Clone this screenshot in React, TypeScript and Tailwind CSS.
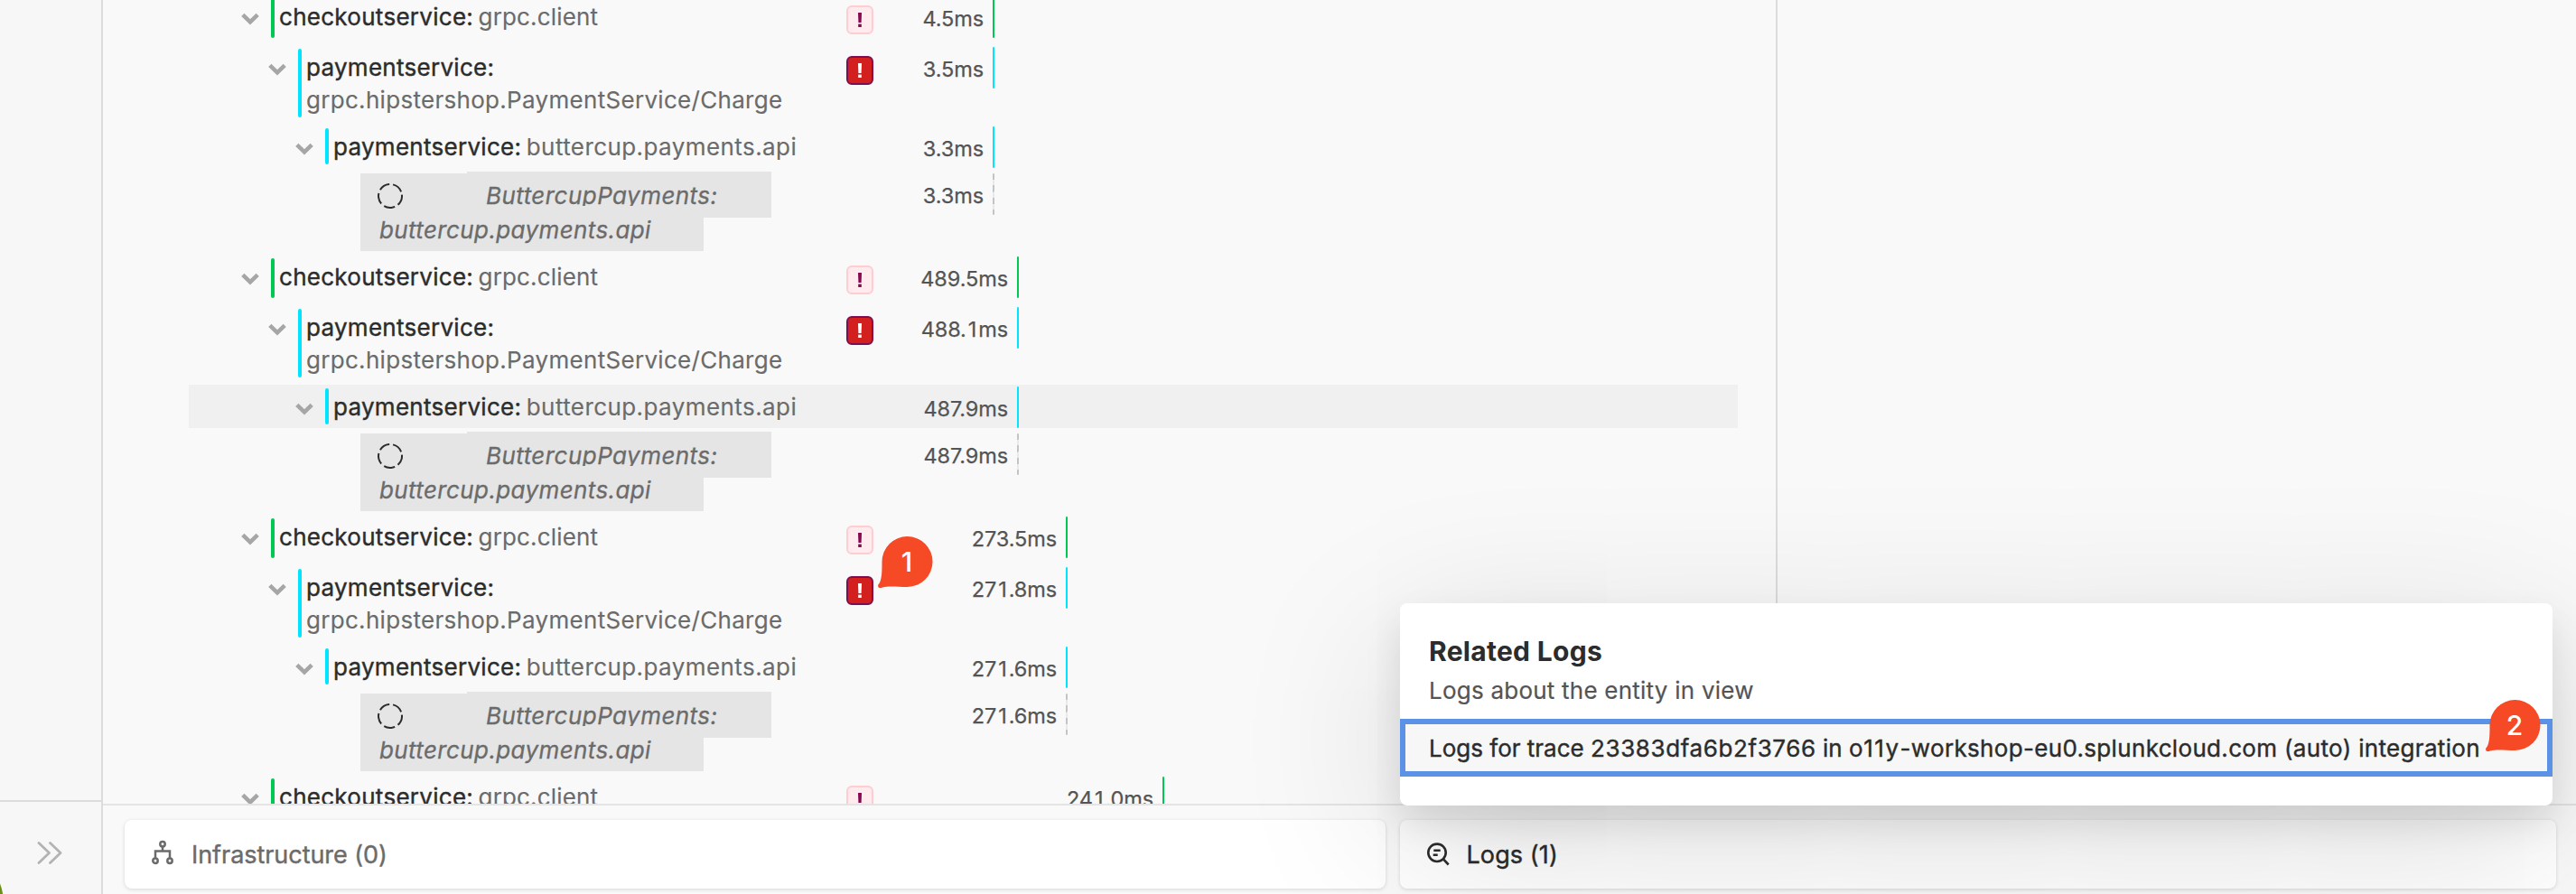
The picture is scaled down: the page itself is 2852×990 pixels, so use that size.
import React from "react";

type Group = { durs: string[]; dur: string; hover?: boolean };

const groups: Group[] = [
  { durs: ["4.5ms", "3.5ms", "3.3ms", "3.3ms"], dur: "w-[122px]" },
  { durs: ["489.5ms", "488.1ms", "487.9ms", "487.9ms"], dur: "w-[149px]", hover: true },
  { durs: ["273.5ms", "271.8ms", "271.6ms", "271.6ms"], dur: "w-[203px]" },
];

const nameClass =
  "ml-[5px] pt-[7px] text-[26px] leading-[36px] tracking-[0.3px] whitespace-nowrap text-[#6b6b6b] [-webkit-text-stroke:0.15px]";

function Caret() {
  return (
    <svg className="mt-[20px] h-[14px] w-[20px] shrink-0" viewBox="0 0 20 14" fill="none">
      <path d="M1.800 2.400 L10 10.400 L18.200 2.400" stroke="#a6a6a6" strokeWidth="4.600" />
    </svg>
  );
}

function Service({ children }: { children: string }) {
  return <span className="tracking-[0.28px] text-[#2c2c2c] [-webkit-text-stroke:0.4px]">{children}</span>;
}

function ErrorBadge({ kind }: { kind?: "soft" | "solid" }) {
  if (!kind) return <div className="w-[30px] shrink-0" />;
  const solid = kind === "solid";
  return (
    <div
      className={
        "mt-3 flex h-8 w-[30px] shrink-0 items-center justify-center rounded-[6px] border-2 " +
        (solid ? "border-[#7d0f50] bg-[#d41f1f]" : "border-[#ffccd2] bg-[#ffebed]")
      }
    >
      <svg width="4" height="16" viewBox="0 0 4 16" fill={solid ? "#ffffff" : "#840a50"}>
        <path d="M0 0H4L3.600 11H0.400Z" />
        <rect x="0.200" y="12.600" width="3.600" height="3.400" />
      </svg>
    </div>
  );
}

function Timing({ text, dur, color }: { text: string; dur: string; color: string }) {
  const [head, tail] = text.split("1");
  return (
    <>
      <div
        className={
          "shrink-0 pt-[11px] text-right text-[23.5px] leading-[32px] tracking-[-0.1px] text-[#545454] [-webkit-text-stroke:0.25px] " +
          dur
        }
      >
        {head}
        {tail !== undefined && <span className="px-[2px]">1</span>}
        {tail}
      </div>
      <div className={"mt-[2px] ml-[10px] h-[46px] w-[2px] shrink-0 rounded-[1px] " + color} />
    </>
  );
}

function CheckoutRow({ text, dur }: { text: string; dur: string }) {
  return (
    <div className="flex h-14 shrink-0">
      <div className="flex w-[728px] shrink-0 pl-[58px]">
        <Caret />
        <div className="mt-1 ml-[13px] h-11 w-1 rounded-[2px] bg-[#00c853]" />
        <div className={nameClass}>
          <Service>checkoutservice:</Service>
          <span className="ml-[5.500px] tracking-[0.15px]">grpc.client</span>
        </div>
      </div>
      <ErrorBadge kind="soft" />
      <Timing text={text} dur={dur} color="bg-[#00c853]" />
    </div>
  );
}

function SpanGroup({ g }: { g: Group }) {
  return (
    <div className="h-72 shrink-0">
      <CheckoutRow text={g.durs[0]} dur={g.dur} />
      <div className="flex h-[88px]">
        <div className="flex w-[728px] shrink-0 pl-[88px]">
          <Caret />
          <div className="mt-1 ml-[13px] h-[76px] w-1 rounded-[2px] bg-[#00e5ff]" />
          <div className={nameClass}>
            <div>
              <Service>paymentservice:</Service>
            </div>
            <div>grpc.hipstershop.PaymentService/Charge</div>
          </div>
        </div>
        <ErrorBadge kind="solid" />
        <Timing text={g.durs[1]} dur={g.dur} color="bg-[#00e5ff]" />
      </div>
      <div className={"mb-1 flex h-12 w-[1715px] " + (g.hover ? "bg-[#f0f0f0]" : "")}>
        <div className="flex w-[728px] shrink-0 pl-[118px]">
          <Caret />
          <div className="mt-1 ml-[13px] h-10 w-1 rounded-[2px] bg-[#00e5ff]" />
          <div className={nameClass}>
            <Service>paymentservice:</Service>
            <span className="ml-[5.500px] tracking-[0.42px]">buttercup.payments.api</span>
          </div>
        </div>
        <ErrorBadge />
        <Timing text={g.durs[2]} dur={g.dur} color="bg-[#00e5ff]" />
      </div>
      <div className="flex h-[92px]">
        <div className="w-[728px] shrink-0 pl-[190px] text-[26px] leading-[36px] tracking-[0.45px] whitespace-nowrap text-[#6b6b6b] italic [-webkit-text-stroke:0.3px]">
          <div className="flex h-[51px] w-[455px]">
            <div className="mt-[2px] w-[118px] bg-[#e5e5e5] pt-[11px] pl-[19px]">
              <svg width="28" height="28" viewBox="0 0 28 28" fill="none">
                <circle
                  cx="14"
                  cy="14"
                  r="13"
                  stroke="#2c2c2c"
                  strokeWidth="2"
                  strokeDasharray="12.400 3.936"
                  transform="rotate(-6 14 14)"
                />
              </svg>
            </div>
            <div className="flex-1 bg-[#e5e5e5] pl-[21px]">
              <div className="h-[38px] overflow-hidden pt-[9px]">ButtercupPayments:</div>
            </div>
          </div>
          <div className="flex h-[37px] w-[380px] bg-[#e5e5e5] pl-[21px]">
            <div className="-mt-1 tracking-[0.38px]">buttercup.payments.api</div>
          </div>
        </div>
        <ErrorBadge />
        <Timing
          text={g.durs[3]}
          dur={g.dur}
          color="bg-[repeating-linear-gradient(165deg,#c4c4c4_0_7px,#e9e9e9_7px_13px)]"
        />
      </div>
    </div>
  );
}

function Marker({ n, pos }: { n: number; pos: string }) {
  return (
    <div className={"absolute h-[58px] w-[61px] " + pos}>
      <svg className="absolute inset-0" width="61" height="58" viewBox="0 0 61 58" fill="#f64a26">
        <path d="M32.500 0 A28 28 0 1 1 32.500 56 C22 56 12 54.500 5 56.500 C0.500 58.500 -1.500 54.500 1.500 52 C4.500 47 4.500 38 4.500 28 A28 28 0 0 1 32.500 0Z" />
      </svg>
      <div className="absolute top-0 left-[4px] w-14 text-center text-[30px] leading-[57px] font-medium text-white">
        {n}
      </div>
    </div>
  );
}

export default function App() {
  return (
    <div className="relative flex h-[990px] w-[2852px] overflow-hidden bg-[#f9f9f9] font-['Inter',sans-serif]">
      <aside className="relative flex w-[114px] shrink-0 flex-col overflow-hidden border-r-2 border-[#dcdcdc] bg-[#f7f7f7]">
        <div className="h-[888px] shrink-0 border-b-2 border-[#dcdcdc]" />
        <div className="flex flex-1 pt-[44px] pl-[41px]">
          <svg
            width="28"
            height="25"
            viewBox="0 0 28 25"
            fill="none"
            stroke="#b3b3b3"
            strokeWidth="2.800"
            strokeLinecap="round"
            strokeLinejoin="round"
          >
            <path d="M2 1.500 L13.500 12.500 L2 23.500 M14.500 1.500 L26 12.500 L14.500 23.500" />
          </svg>
        </div>
        <div className="absolute top-[940px] -left-[116px] h-[120px] w-[120px] rounded-full bg-[#6b8e16]" />
      </aside>
      <div className="flex flex-1 flex-col">
        <div className="flex h-[890px]">
          <div className="-mt-[6px] flex h-[896px] w-[1852px] flex-col overflow-hidden pl-[95px]">
            {groups.map((g, i) => (
              <SpanGroup key={i} g={g} />
            ))}
            <CheckoutRow text="241.0ms" dur="w-[310px]" />
          </div>
          <div className="flex-1 border-l-2 border-[#dcdcdc]" />
        </div>
        <div className="flex h-[100px] gap-4 border-t-2 border-[#e4e4e4] pt-4 pr-[22px] pl-6">
          <div className="flex h-[76px] w-[1396px] items-center rounded-[8px] bg-white pl-[29px] text-[#6b6b6b] shadow-[0_1px_4px_rgba(0,0,0,0.14)]">
            <svg
              className="overflow-visible"
              width="26"
              height="28"
              viewBox="0 0 26 28"
              fill="none"
              stroke="currentColor"
              strokeWidth="2.500"
            >
              <circle cx="13" cy="2.700" r="2.700" />
              <circle cx="5" cy="21.300" r="2.700" />
              <circle cx="21" cy="21.300" r="2.700" />
              <path d="M13 5.500 V10.500 M5 18.500 V10.500 H21 V18.500" />
            </svg>
            <span className="ml-[19px] pt-[2px] text-[27px] tracking-[-0.05px] [-webkit-text-stroke:0.4px]">
              Infrastructure (0)
            </span>
          </div>
          <div className="flex h-[76px] flex-1 items-center rounded-[8px] bg-white pl-[29px] text-[#2c2c2c] shadow-[0_1px_4px_rgba(0,0,0,0.14)]">
            <svg width="26" height="26" viewBox="0 0 26 26" fill="none" stroke="currentColor" strokeWidth="2.600">
              <circle cx="12" cy="11.300" r="9.700" />
              <path d="M18.500 17.800 L24.700 24.500 M8.300 8.800 H15.700 M7.700 13.800 H12.700" />
            </svg>
            <span className="ml-[18.500px] pt-[2px] text-[27px] tracking-[0.1px] [-webkit-text-stroke:0.4px]">
              Logs (1)
            </span>
          </div>
        </div>
      </div>

      <div className="absolute top-[668px] left-[1550px] h-56 w-[1276px] rounded-[8px] bg-white pt-[35px] text-[#2c2c2c] shadow-[0_20px_40px_rgba(0,0,0,0.10),0_40px_180px_rgba(0,0,0,0.15)]">
        <div className="pl-[32px] text-[30px] leading-[36px] font-bold tracking-[0.3px]">Related Logs</div>
        <div className="mt-2 pl-[32px] text-[26px] leading-[36px] tracking-[0.23px] text-[#545454] [-webkit-text-stroke:0.2px]">
          Logs about the entity in view
        </div>
        <div className="mt-[13px] h-16 border-[6px] border-[#5c92e5] bg-[#f7f7f7] pl-[26px] text-[26px] leading-[53px] whitespace-pre [-webkit-text-stroke:0.4px]">
          Logs for trace <span className="tracking-[0.6px]">23383dfa6b2f3766</span> in{" "}
          <span className="tracking-[1.500px]">o11y</span>
          <span className="tracking-[0.33px]">-workshop-eu0.splunkcloud.com (auto) integration</span>
        </div>
      </div>
      <Marker n={1} pos="top-[594px] left-[972px]" />
      <Marker n={2} pos="top-[775px] left-[2752px]" />
    </div>
  );
}
